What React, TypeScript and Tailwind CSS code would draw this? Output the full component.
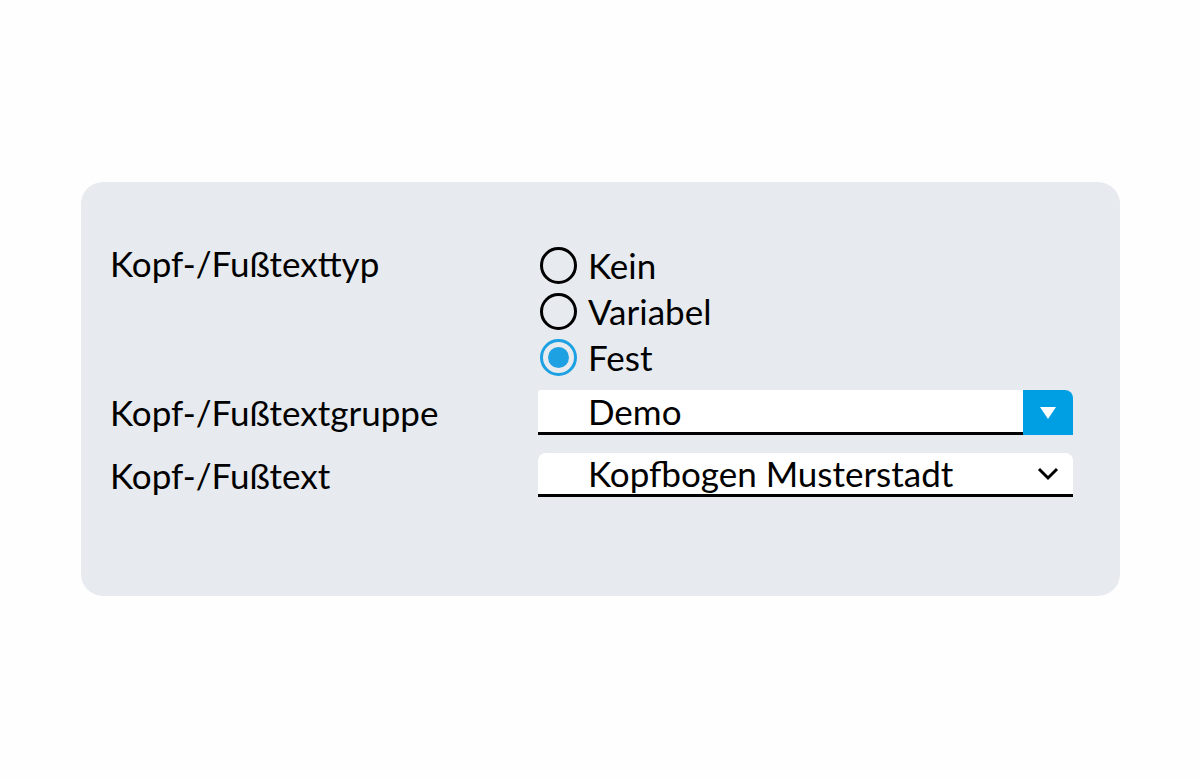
import React from "react";

const font = { fontFamily: "Lato, 'Open Sans', sans-serif" };

function Radio({ label, checked }: { label: string; checked?: boolean }) {
  return (
    <div className="flex h-[46px] items-center">
      <span
        className={
          "ml-[2px] flex h-[37px] w-[37px] items-center justify-center rounded-full border-[3px] " +
          (checked ? "border-[#1da1e2]" : "border-black")
        }
      >
        {checked && <span className="h-[21px] w-[21px] rounded-full bg-[#1da1e2]" />}
      </span>
      <span className="ml-[11px] text-[35px] leading-none text-black">{label}</span>
    </div>
  );
}

export default function App() {
  return (
    <div className="flex h-[780px] w-[1200px] items-start bg-[#fefefe] pt-[182px] pl-[81px]" style={font}>
      <div className="h-[414px] w-[1039px] rounded-[22px] bg-[#e7eaee] pl-[29px] pt-[60px]">
        <div className="flex">
          <div className="w-[428px] pt-[5px] text-[35px] leading-[32px] text-black">Kopf-/Fußtexttyp</div>
          <div className="flex flex-col">
            <Radio label="Kein" />
            <Radio label="Variabel" />
            <Radio label="Fest" checked />
          </div>
        </div>

        <div className="mt-[10px] flex items-center">
          <div className="w-[428px] text-[35px] leading-none text-black">Kopf-/Fußtextgruppe</div>
          <div className="flex h-[45px] w-[535px] overflow-hidden rounded-tr-[8px] rounded-tl-[3px] bg-white">
            <div className="flex flex-1 items-center border-b-[3px] border-black pl-[50px] text-[35px] leading-none text-black">
              Demo
            </div>
            <div className="flex w-[50px] items-center justify-center bg-[#009ee3]">
              <svg width="18" height="14" viewBox="0 0 18 14">
                <path d="M1 1h16L9 13z" fill="#fff" />
              </svg>
            </div>
          </div>
        </div>

        <div className="mt-[18px] flex items-center">
          <div className="w-[428px] text-[35px] leading-none text-black">Kopf-/Fußtext</div>
          <div className="flex h-[44px] w-[535px] items-center rounded-t-[8px] border-b-[3px] border-black bg-white pl-[50px] pr-[14px]">
            <span className="flex-1 text-[35px] leading-none text-black">Kopfbogen Musterstadt</span>
            <svg width="22" height="14" viewBox="0 0 22 14">
              <path d="M2 2l9 9 9-9" fill="none" stroke="#000" strokeWidth="3" />
            </svg>
          </div>
        </div>
      </div>
    </div>
  );
}
